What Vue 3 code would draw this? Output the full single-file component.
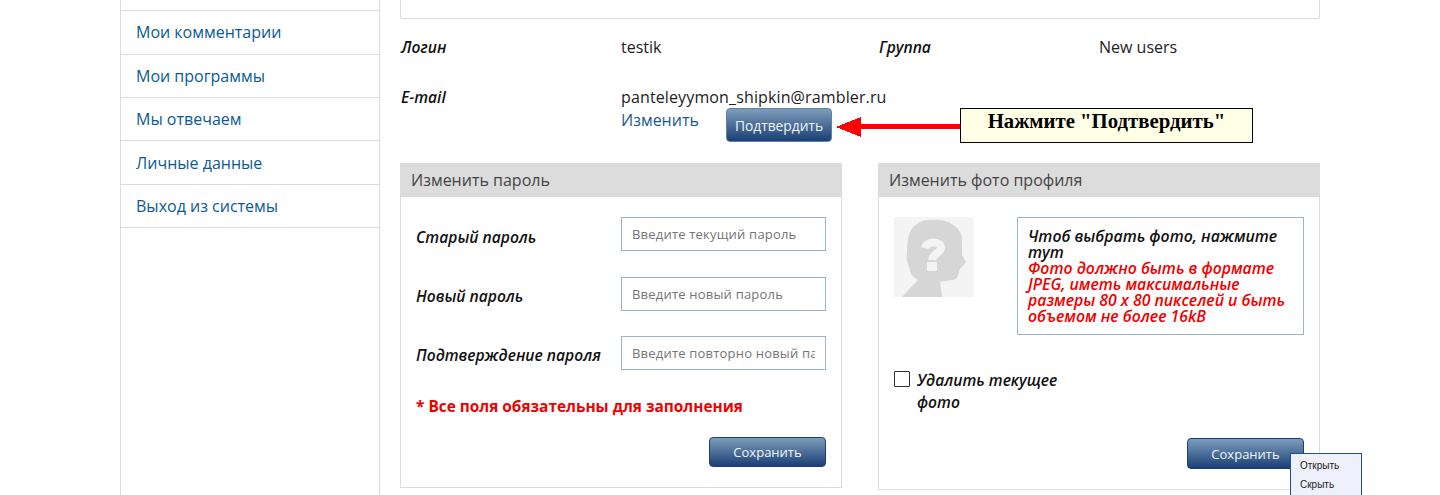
<script setup>
const menu = ['Мои комментарии', 'Мои программы', 'Мы отвечаем', 'Личные данные', 'Выход из системы']
const fields = [
  { label: 'Старый пароль', ph: 'Введите текущий пароль' },
  { label: 'Новый пароль', ph: 'Введите новый пароль' },
  { label: 'Подтверждение пароля', ph: 'Введите повторно новый пароль' }
]
</script>

<template>
  <div class="page">
    <aside class="side">
      <a v-for="m in menu" :key="m" class="side-item">{{ m }}</a>
    </aside>
    <main class="main">
      <div class="topbox"></div>
      <div class="info">
        <div class="lbl">Логин</div>
        <div class="val">testik</div>
        <div class="lbl">Группа</div>
        <div class="val">New users</div>
      </div>
      <div class="mail">
        <div class="lbl mail-lbl">E-mail</div>
        <div class="mail-col">
          <div class="val email">panteleyymon_shipkin@rambler.ru</div>
          <div class="confirm-row">
            <a class="change">Изменить</a>
            <button class="btn confirm">Подтвердить</button>
          </div>
        </div>
      </div>
      <div class="panels">
        <section class="panel left">
          <h3 class="head">Изменить пароль</h3>
          <div class="body">
            <div v-for="f in fields" :key="f.label" class="field">
              <label class="flabel">{{ f.label }}</label>
              <input class="inp" :placeholder="f.ph" />
            </div>
            <p class="req">* Все поля обязательны для заполнения</p>
            <div class="actions"><button class="btn save">Сохранить</button></div>
          </div>
        </section>
        <section class="panel right">
          <h3 class="head">Изменить фото профиля</h3>
          <div class="body body-r">
            <div class="photo-row">
              <svg class="avatar" width="80" height="80" viewBox="0 0 80 80">
                <defs>
                  <filter id="soft" x="-5%" y="-5%" width="110%" height="110%">
                    <feGaussianBlur stdDeviation="0.7" />
                  </filter>
                </defs>
                <rect width="80" height="80" fill="#f4f4f4" />
                <g filter="url(#soft)">
                  <path d="M33 3C46 2 55 4 59 8C65 12 68 17 68 22L68 38L72 45L66 52L64 58C63 62 60 63 58 63L46 65L48 80L8 80L24 63C19 60 16 57 16 52C13 46 12 40 13 35C13 26 14 20 16 15C19 9 25 4 33 3Z" fill="#d6d6d6" />
                  <path d="M31 31C32 27 36 25.5 40 25.5C44.5 25.5 47 28 47 31C47 35.5 38.5 37 38 43" fill="none" stroke="#f4f4f4" stroke-width="8" />
                  <path d="M33 45H43V54H33Z" fill="#f4f4f4" />
                </g>
              </svg>
              <div class="note">
                <div class="note-b">Чтоб выбрать фото, нажмите тут</div>
                <div class="note-r">Фото должно быть в формате JPEG, иметь максимальные размеры 80 х 80 пикселей и быть объемом не более 16kB</div>
              </div>
            </div>
            <div class="del">
              <span class="check"></span>
              <span class="del-text">Удалить текущее фото</span>
            </div>
            <div class="actions actions-r"><button class="btn save save-r">Сохранить</button></div>
          </div>
        </section>
      </div>
    </main>

    <div class="hint">
      <svg class="arrow" width="125" height="20" viewBox="0 0 125 20" shape-rendering="crispEdges">
        <path d="M125 6.5H25V0L0 10L25 20V11.5H125Z" fill="#ff0000" />
      </svg>
      <div class="hint-box">Нажмите "Подтвердить"</div>
    </div>

    <div class="ctx">
      <div class="ctx-i">Открыть</div>
      <div class="ctx-i">Скрыть</div>
    </div>
  </div>
</template>

<style>
html, body { margin: 0; background: #fff; overflow: hidden; }
</style>

<style scoped>
.page {
  position: relative;
  width: 1440px;
  height: 495px;
  overflow: hidden;
  display: flex;
  align-items: flex-start;
  padding-left: 120px;
  box-sizing: border-box;
  font-family: "Open Sans", sans-serif;
  color: #222;
}
.side {
  width: 260px;
  height: 495px;
  box-sizing: border-box;
  padding-top: 10px;
  border-left: 1px solid #dcdcdc;
  border-right: 1px solid #dcdcdc;
  flex: none;
}
.side-item {
  display: block;
  height: 43px;
  line-height: 43px;
  box-sizing: border-box;
  border-top: 1px solid #dcdcdc;
  padding-left: 15px;
  font-size: 16px;
  color: #0b5a96;
}
.side-item:nth-child(3n+1) { height: 44px; }
.side-item:nth-child(4) { line-height: 44px; }
.side-item:last-child { border-bottom: 1px solid #dcdcdc; height: 44px; }
.main { width: 920px; margin-left: 20px; flex: none; }
.topbox {
  height: 19px;
  box-sizing: border-box;
  border: 1px solid #dcdcdc;
  border-top: 0;
}
.info {
  display: grid;
  grid-template-columns: 221px 257px 221px 1fr;
  align-items: center;
  height: 22px;
  margin-top: 17px;
}
.lbl {
  font-weight: 600;
  font-style: italic;
  font-size: 15.6px;
  color: #111;
  padding-left: 1px;
}
.val { font-size: 16px; color: #222; line-height: 22px; }
.email { letter-spacing: 0.13px; }
.mail { display: flex; margin-top: 28px; }
.mail-lbl { width: 221px; line-height: 22px; box-sizing: border-box; flex: none; }
.mail-col { flex: 1; }
.confirm-row { display: flex; align-items: flex-start; margin-top: 1px; height: 34px; }
.change { font-size: 16px; line-height: 22px; color: #1c5a8a; width: 105px; }
.btn {
  font-family: "Open Sans", sans-serif;
  font-size: 13px;
  color: #f2f5f8;
  border-radius: 4px;
  background: linear-gradient(#7d9dbb, #1b3f75);
  padding: 0;
  box-sizing: border-box;
}
.confirm {
  width: 106px;
  height: 34px;
  margin-top: -1px;
  font-size: 13.8px;
  border: 1px solid #5c82a8;
}
.panels { display: flex; justify-content: space-between; align-items: flex-start; margin-top: 20px; }
.panel {
  width: 442px;
  box-sizing: border-box;
  border: 1px solid #dcdcdc;
  border-top: 0;
}
.left { height: 325px; }
.right { height: 327px; }
.head {
  margin: 0 -1px;
  height: 34px;
  line-height: 34px;
  background: #dcdcdc;
  font-size: 16px;
  font-weight: 400;
  color: #444;
  padding-left: 11px;
}
.body { padding: 20px 15px 0; }
.field {
  display: flex;
  justify-content: space-between;
  height: 35px;
  margin-bottom: 24.5px;
}
.flabel {
  font-weight: 600;
  font-style: italic;
  font-size: 15.6px;
  color: #111;
  line-height: 39px;
}
.field:first-child .flabel { line-height: 41px; }
.inp {
  width: 205px;
  height: 34px;
  box-sizing: border-box;
  border: 1px solid #9db3c8;
  padding: 0 10px;
  font-family: "Open Sans", sans-serif;
  font-size: 13px;
  letter-spacing: 0.2px;
  outline: none;
}
.inp::placeholder { color: #757575; opacity: 1; }
.req {
  margin: 0;
  font-size: 15.4px;
  font-weight: 700;
  color: #f00000;
  line-height: 22px;
}
.actions { display: flex; justify-content: flex-end; margin-top: 19px; }
.save { width: 117px; height: 30px; border: 1px solid #1c3f75; }
.save-r { height: 31px; }
.body-r { padding-right: 15px; }
.photo-row { display: flex; justify-content: space-between; align-items: flex-start; }
.avatar { flex: none; display: block; }
.note {
  width: 287px;
  height: 118px;
  box-sizing: border-box;
  border: 1px solid #9db3c8;
  padding: 10px 10px 0;
  font-size: 15.8px;
  line-height: 16px;
  font-weight: 600;
  font-style: italic;
}
.note-b { color: #111; }
.note-r { color: #f00000; }
.del { display: flex; align-items: flex-start; margin-top: 34px; }
.check {
  width: 14px;
  height: 14px;
  border: 1px solid #333;
  border-radius: 1px;
  flex: none;
  margin-top: 2px;
}
.del-text {
  width: 150px;
  margin-left: 7px;
  font-weight: 600;
  font-style: italic;
  font-size: 15.6px;
  line-height: 22px;
  color: #111;
}
.actions-r { margin-top: 25px; }
.hint {
  position: absolute;
  left: 836px;
  top: 108px;
  display: flex;
  align-items: flex-start;
}
.arrow { display: block; margin-top: 9px; flex: none; }
.hint-box {
  width: 293px;
  height: 35px;
  box-sizing: border-box;
  margin-left: -1px;
  border: 1px solid #000;
  background: #ffffe6;
  font-family: "Liberation Serif", serif;
  font-weight: 700;
  font-size: 20.8px;
  line-height: 24px;
  color: #000;
  text-align: center;
}
.ctx {
  position: absolute;
  left: 1290px;
  top: 453px;
  width: 72px;
  height: 44px;
  box-sizing: border-box;
  border: 1px solid #1c4f8f;
  background: #eef0fb;
  padding: 2px 0 0 9px;
  font-family: "Liberation Sans", sans-serif;
  font-size: 10px;
  color: #222;
}
.ctx-i { height: 19px; line-height: 19px; }
</style>
